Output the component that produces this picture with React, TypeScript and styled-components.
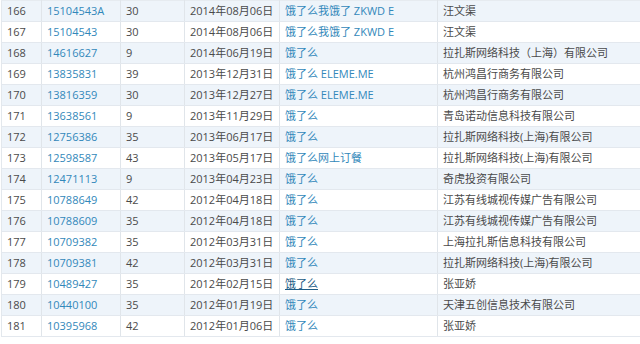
import styled, { createGlobalStyle } from 'styled-components';

type Row = {
  no: number;
  regNo: string;
  cls: number;
  date: string;
  mark: string;
  owner: string;
  hovered?: boolean;
};

const rows: Row[] = [
  { no: 166, regNo: '15104543A', cls: 30, date: '2014年08月06日', mark: '饿了么我饿了 ZKWD E', owner: '汪文渠' },
  { no: 167, regNo: '15104543', cls: 30, date: '2014年08月06日', mark: '饿了么我饿了 ZKWD E', owner: '汪文渠' },
  { no: 168, regNo: '14616627', cls: 9, date: '2014年06月19日', mark: '饿了么', owner: '拉扎斯网络科技（上海）有限公司' },
  { no: 169, regNo: '13835831', cls: 39, date: '2013年12月31日', mark: '饿了么 ELEME.ME', owner: '杭州鸿昌行商务有限公司' },
  { no: 170, regNo: '13816359', cls: 30, date: '2013年12月27日', mark: '饿了么 ELEME.ME', owner: '杭州鸿昌行商务有限公司' },
  { no: 171, regNo: '13638561', cls: 9, date: '2013年11月29日', mark: '饿了么', owner: '青岛诺动信息科技有限公司' },
  { no: 172, regNo: '12756386', cls: 35, date: '2013年06月17日', mark: '饿了么', owner: '拉扎斯网络科技(上海)有限公司' },
  { no: 173, regNo: '12598587', cls: 43, date: '2013年05月17日', mark: '饿了么网上订餐', owner: '拉扎斯网络科技(上海)有限公司' },
  { no: 174, regNo: '12471113', cls: 9, date: '2013年04月23日', mark: '饿了么', owner: '奇虎投资有限公司' },
  { no: 175, regNo: '10788649', cls: 42, date: '2012年04月18日', mark: '饿了么', owner: '江苏有线城视传媒广告有限公司' },
  { no: 176, regNo: '10788609', cls: 35, date: '2012年04月18日', mark: '饿了么', owner: '江苏有线城视传媒广告有限公司' },
  { no: 177, regNo: '10709382', cls: 35, date: '2012年03月31日', mark: '饿了么', owner: '上海拉扎斯信息科技有限公司' },
  { no: 178, regNo: '10709381', cls: 42, date: '2012年03月31日', mark: '饿了么', owner: '拉扎斯网络科技(上海)有限公司' },
  { no: 179, regNo: '10489427', cls: 35, date: '2012年02月15日', mark: '饿了么', owner: '张亚娇', hovered: true },
  { no: 180, regNo: '10440100', cls: 35, date: '2012年01月19日', mark: '饿了么', owner: '天津五创信息技术有限公司' },
  { no: 181, regNo: '10395968', cls: 42, date: '2012年01月06日', mark: '饿了么', owner: '张亚娇' },
];

// column widths in px: 序号, 注册号, 类别, 申请日期, 商标名称, 申请人
const colWidths = [40, 79, 64, 95, 158, 220];

const GlobalStyle = createGlobalStyle`
  body {
    margin: 0;
    background: #fff;
  }
`;

export default function App() {
  return (
    <Page>
      <GlobalStyle />
      <Table>
        <colgroup>
          {colWidths.map((w, i) => <Col key={i} $w={w} />)}
        </colgroup>
        <tbody>
          {rows.map((r, i) => (
            <TableRow key={r.no} $striped={i % 2 === 0}>
              <Cell>{r.no}</Cell>
              <Cell><Link>{r.regNo}</Link></Cell>
              <Cell>{r.cls}</Cell>
              <Cell>{r.date}</Cell>
              <Cell><Link $hovered={r.hovered}>{r.mark}</Link></Cell>
              <Cell>{r.owner}</Cell>
            </TableRow>
          ))}
        </tbody>
      </Table>
    </Page>
  );
}

const Page = styled.div`
    width: 640px;
    height: 344px;
    overflow: hidden;
    padding-left: 1px;
    box-sizing: border-box;
    font-family: "Open Sans", "Noto Sans CJK SC", sans-serif;
    font-size: 11px;
    color: #4a4a4a;
  `,
  Table = styled.table`
    border-collapse: collapse;
    table-layout: fixed;
    width: 656px;
    border-left: 1px solid #e3e8ed;
    border-top: 1px solid #e6ebf0;
  `,
  Col = styled.col<{ $w: number }>`
    width: ${p => p.$w}px;
  `,
  TableRow = styled.tr<{ $striped: boolean }>`
    height: 21px;
    background: ${p => (p.$striped ? '#eef4fa' : '#fff')};
  `,
  Cell = styled.td`
    padding: 0 0 0 5px;
    height: 20px;
    line-height: 20px;
    border-right: 1px solid #e0e5ea;
    border-bottom: 1px solid #e3e8ee;
    white-space: nowrap;
    overflow: hidden;
  `,
  Link = styled.span<{ $hovered?: boolean }>`
    color: ${p => (p.$hovered ? '#1d5c86' : '#3288ba')};
    text-decoration: ${p => (p.$hovered ? 'underline' : 'none')};
    cursor: pointer;
  `;
